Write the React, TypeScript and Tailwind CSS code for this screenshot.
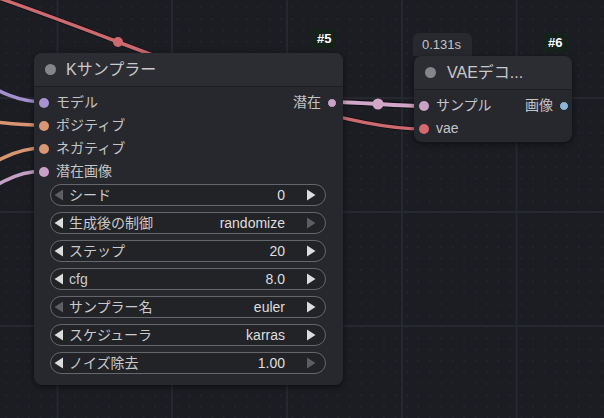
import React from "react";

const font = "font-['Liberation_Sans','Noto_Sans_CJK_JP',sans-serif]";

type Slot = { label: string; color: string };

const inputs: Slot[] = [
	{ label: "モデル", color: "bg-[#a893cf]" },
	{ label: "ポジティブ", color: "bg-[#d99774]" },
	{ label: "ネガティブ", color: "bg-[#d99774]" },
	{ label: "潜在画像", color: "bg-[#c9a0c6]" },
];

// widget rows of the sampler node; left / right tell if the arrow is usable
const widgets = [
	{ label: "シード", value: "0", left: false, right: true },
	{ label: "生成後の制御", value: "randomize", left: true, right: false },
	{ label: "ステップ", value: "20", left: true, right: true },
	{ label: "cfg", value: "8.0", left: true, right: true },
	{ label: "サンプラー名", value: "euler", left: false, right: true },
	{ label: "スケジューラ", value: "karras", left: true, right: true },
	{ label: "ノイズ除去", value: "1.00", left: true, right: false },
];

const Arrow = ({ dir, on }: { dir: "l" | "r"; on: boolean }) => (
	<svg width="10" height="12" viewBox="0 0 10 12" className="shrink-0">
		<path
			d={dir === "l" ? "M9 0.5 L0.5 6 L9 11.5 Z" : "M1 0.5 L9.5 6 L1 11.5 Z"}
			fill={on ? "#dcdcdc" : "#5c5e63"}
		/>
	</svg>
);

const Badge = ({ text }: { text: string }) => (
	<div className="absolute px-[5px] h-[19px] flex items-center bg-[#14221a] text-white text-[13px] font-bold">
		{text}
	</div>
);

const Grid = () => (
	<svg className="absolute inset-0" width="604" height="418">
		<defs>
			<pattern id="dots" x="0.5" y="2" width="11.45" height="11.4" patternUnits="userSpaceOnUse">
				<rect x="5" y="5" width="1.3" height="1.3" fill="#2a2d34" />
			</pattern>
		</defs>
		<rect width="604" height="418" fill="#1b1d23" />
		<rect width="604" height="418" fill="url(#dots)" />
		{[57.5, 172, 287, 402, 516.5].map((x) => (
			<line key={x} x1={x} y1="0" x2={x} y2="418" stroke="#25282e" strokeWidth="2" />
		))}
		{[98, 212, 326].map((y) => (
			<line key={y} x1="0" y1={y} x2="604" y2={y} stroke="#25282e" strokeWidth="2" />
		))}
	</svg>
);

const Wires = () => (
	<svg className="absolute inset-0" width="604" height="418">
		{/* vae link passing under the sampler */}
		<path d="M-188 -45 C-33 -45 269 129 424 129" stroke="#000" strokeOpacity="0.5" strokeWidth="5" fill="none" />
		<path d="M-188 -45 C-33 -45 269 129 424 129" stroke="#cd6a70" strokeWidth="3.5" fill="none" />
		<circle cx="118" cy="42" r="5" fill="#cd6a70" />
		{/* left side inputs */}
		<path d="M-90 58 C-30 58 -10 102 44 102" stroke="#a48fcf" strokeWidth="3.5" fill="none" />
		<path d="M-90 114 C-40 114 -10 125 44 125" stroke="#d99572" strokeWidth="3.5" fill="none" />
		<path d="M-90 205 C-40 205 -15 148 44 148" stroke="#d99572" strokeWidth="3.5" fill="none" />
		<path d="M-90 232 C-40 232 -15 171 44 171" stroke="#c4a0c6" strokeWidth="3.5" fill="none" />
		{/* latent link */}
		<path d="M332 102 C355 102 401 106 424 106" stroke="#000" strokeOpacity="0.5" strokeWidth="6" fill="none" />
		<path d="M332 102 C355 102 401 106 424 106" stroke="#d2a6c8" strokeWidth="4" fill="none" />
		<circle cx="378" cy="104" r="5.5" fill="#d2a6c8" />
	</svg>
);

const Sampler = () => (
	<div className="absolute left-[34px] top-[53px] w-[309px] h-[332px] rounded-[8px] bg-[#27282e] shadow-[0_2px_6px_rgba(0,0,0,0.5)] flex flex-col">
		<div className="h-[34px] flex items-center gap-[10px] pl-[11px] bg-[#2c2d33] rounded-t-[8px] border-b border-[#1d1e23]">
			<span className="w-[11px] h-[11px] rounded-full bg-[#84868b]" />
			<span className="text-[16px] text-[#c9c9cb]">Kサンプラー</span>
		</div>
		<div className="relative pt-[4px]">
			{inputs.map((s) => (
				<div key={s.label} className="h-[23px] flex items-center gap-[7px] pl-[5px]">
					<span className={`w-[10px] h-[10px] rounded-full ${s.color}`} />
					<span className="text-[14px] text-[#c4c4c6]">{s.label}</span>
				</div>
			))}
			<div className="absolute right-[6px] top-[4px] h-[23px] flex items-center gap-[6px]">
				<span className="text-[14px] text-[#c4c4c6]">潜在</span>
				<span className="w-[10px] h-[10px] rounded-full bg-[#c9a0c6] border border-[#1b1c20]" />
			</div>
		</div>
		<div className="flex flex-col gap-[6px] px-[16px] pr-[17px] mt-[1px]">
			{widgets.map((w) => (
				<div
					key={w.label}
					className="h-[22px] rounded-full bg-[#222327] border border-[#64666b] flex items-center pl-[3px] pr-[9px]"
				>
					<Arrow dir="l" on={w.left} />
					<span className="ml-[5px] text-[14px] text-[#cacacc]">{w.label}</span>
					<span className="ml-auto text-[14px] text-[#dedede]">{w.value}</span>
					<span className="ml-[21px]">
						<Arrow dir="r" on={w.right} />
					</span>
				</div>
			))}
		</div>
	</div>
);

const VaeDecode = () => (
	<>
		<div className="absolute left-[413px] top-[33px] w-[59px] h-[23px] rounded-t-[6px] bg-[#27292f] flex items-center pl-[9px] text-[13px] text-[#c4c4c6]">
			0.131s
		</div>
		<div className="absolute left-[414px] top-[56px] w-[158px] h-[86px] rounded-[8px] bg-[#27282e] shadow-[0_2px_6px_rgba(0,0,0,0.5)] flex flex-col">
			<div className="h-[34px] flex items-center gap-[11px] pl-[11px] bg-[#2c2d33] rounded-t-[8px] border-b border-[#1d1e23]">
				<span className="w-[11px] h-[11px] rounded-full bg-[#84868b]" />
				<span className="text-[16px] text-[#c9c9cb]">VAEデコ...</span>
			</div>
			<div className="relative pt-[4px]">
				<div className="h-[23px] flex items-center gap-[7px] pl-[5px]">
					<span className="w-[10px] h-[10px] rounded-full bg-[#c9a0c6]" />
					<span className="text-[14px] text-[#c4c4c6]">サンプル</span>
				</div>
				<div className="h-[23px] flex items-center gap-[7px] pl-[5px]">
					<span className="w-[10px] h-[10px] rounded-full bg-[#d4686d]" />
					<span className="text-[14px] text-[#c4c4c6]">vae</span>
				</div>
				<div className="absolute right-[3px] top-[4px] h-[23px] flex items-center gap-[6px]">
					<span className="text-[14px] text-[#c4c4c6]">画像</span>
					<span className="w-[10px] h-[10px] rounded-full bg-[#8cb6d6] border border-[#1b1c20]" />
				</div>
			</div>
		</div>
	</>
);

export default function App() {
	return (
		<div className={`relative w-[604px] h-[418px] overflow-hidden bg-[#1b1d23] ${font}`}>
			<Grid />
			<Wires />
			<Sampler />
			<VaeDecode />
			<div className="absolute left-[312px] top-[29px]">
				<Badge text="#5" />
			</div>
			<div className="absolute left-[543px] top-[33px]">
				<Badge text="#6" />
			</div>
		</div>
	);
}
